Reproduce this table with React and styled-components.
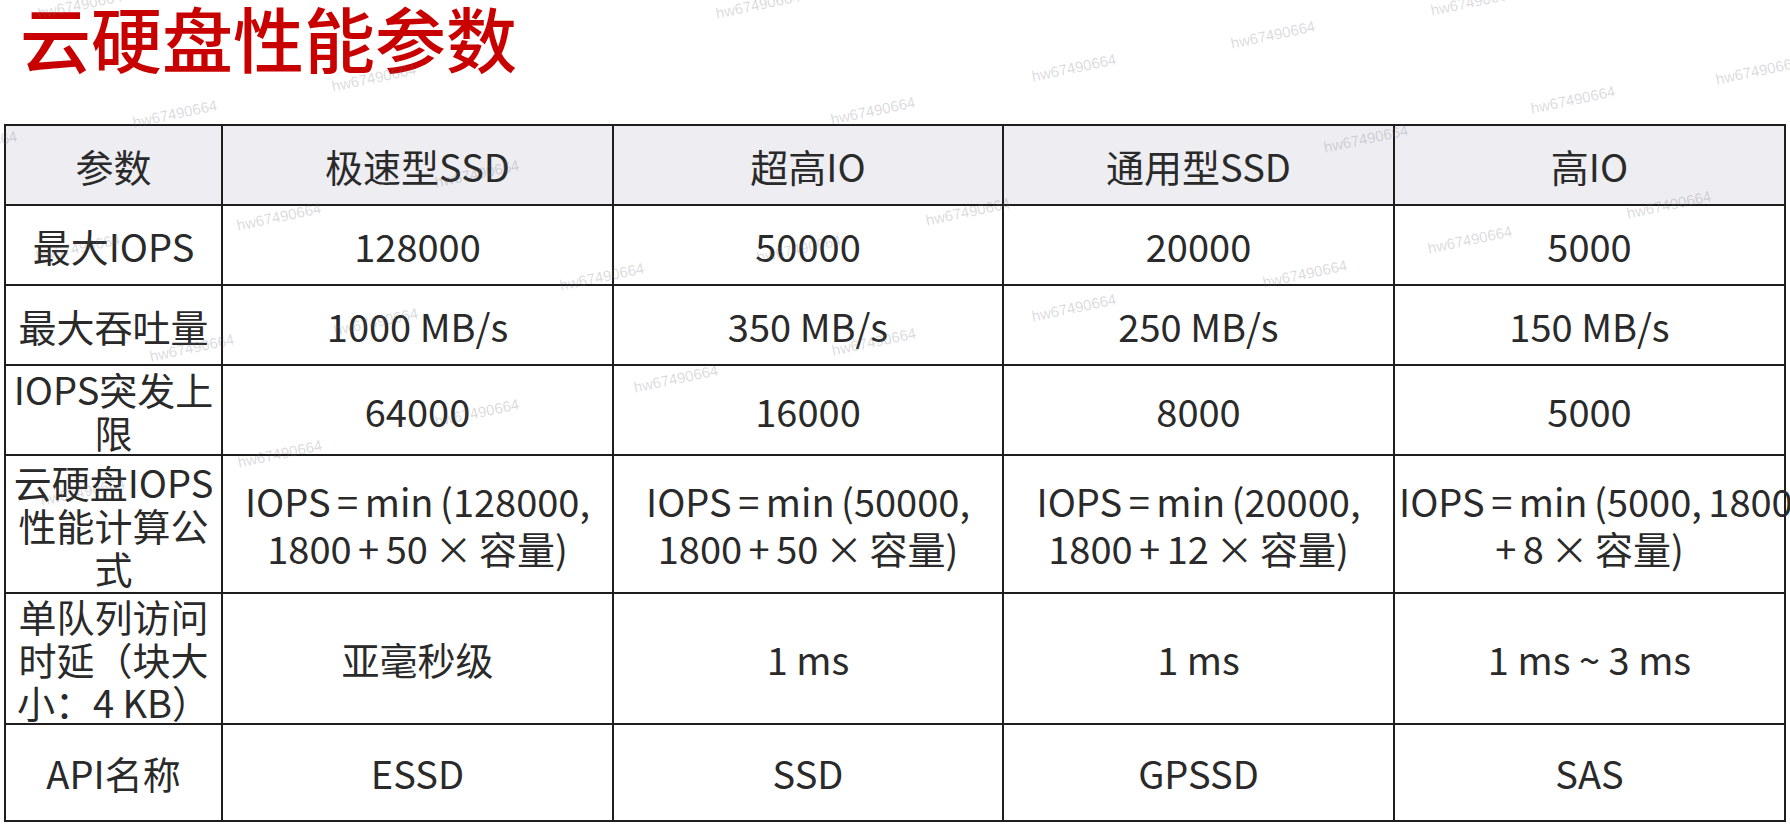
import React from "react";
import styled, { createGlobalStyle } from "styled-components";

const GlobalStyle = createGlobalStyle`
  html, body {
    margin: 0;
    padding: 0;
    background: #ffffff;
  }
  body {
    width: 1790px;
    height: 826px;
    overflow: hidden;
    font-family: "Noto Sans CJK SC", "Noto Sans", sans-serif;
  }
`;

const Page = styled.div`
  position: relative;
  width: 1790px;
  height: 826px;
  display: flex;
  flex-direction: column;
`;

const Header = styled.header`
  height: 124px;
  padding-left: 20px;
  display: flex;
  align-items: flex-start;
`;

const Title = styled.h1`
  margin: 0;
  font-family: "Noto Sans CJK SC", sans-serif;
  font-size: 71px;
  line-height: 72px;
  font-weight: 500;
  color: #c80000;
`;

const Table = styled.table`
  margin-left: 4px;
  width: 1780px;
  border-collapse: collapse;
  table-layout: fixed;
  color: #2a2a2a;
  font-size: 38px;
  line-height: 43px;
  font-weight: 400;
`;

const Row = styled.tr`
  height: ${(p) => p.$h}px;
  background: ${(p) => (p.$head ? "#ededf2" : "#ffffff")};
`;

const Cell = styled.td`
  border: 2px solid #1e1e1e;
  padding: 0 4px;
  text-align: center;
  vertical-align: middle;
  white-space: ${(p) => (p.$formula ? "nowrap" : "normal")};
  line-height: ${(p) => (p.$formula ? "47px" : "43px")};
  word-spacing: ${(p) => (p.$formula ? "-2px" : "0")};
`;

const Marks = styled.div`
  position: absolute;
  inset: 0;
  pointer-events: none;
  overflow: hidden;
`;

const Mark = styled.span`
  position: absolute;
  left: ${(p) => p.$x - 43}px;
  top: ${(p) => p.$y - 9}px;
  font-family: "Liberation Sans", Arial, sans-serif;
  font-size: 15px;
  line-height: 18px;
  color: rgba(110, 110, 120, 0.26);
  transform: rotate(-12deg);
  white-space: nowrap;
`;

const columns = ["参数", "极速型SSD", "超高IO", "通用型SSD", "高IO"];

const rows = [
  { label: "最大IOPS", h: 80, cells: ["128000", "50000", "20000", "5000"] },
  { label: "最大吞吐量", h: 80, cells: ["1000 MB/s", "350 MB/s", "250 MB/s", "150 MB/s"] },
  { label: "IOPS突发上限", h: 90, cells: ["64000", "16000", "8000", "5000"] },
  {
    label: "云硬盘IOPS性能计算公式",
    h: 138,
    formula: true,
    cells: [
      ["IOPS = min (128000,", "1800 + 50 × 容量)"],
      ["IOPS = min (50000,", "1800 + 50 × 容量)"],
      ["IOPS = min (20000,", "1800 + 12 × 容量)"],
      ["IOPS = min (5000, 1800", "+ 8 × 容量)"],
    ],
  },
  { label: "单队列访问时延（块大小：4 KB）", h: 130, cells: ["亚毫秒级", "1 ms", "1 ms", "1 ms ~ 3 ms"] },
  { label: "API名称", h: 97, cells: ["ESSD", "SSD", "GPSSD", "SAS"] },
];

// faint watermark stamps from the source slide
const marks = [
  [758, 5], [1473, 2], [80, 5], [374, 78], [1273, 35], [175, 114], [873, 111],
  [1074, 68], [1573, 100], [1758, 71], [-25, 145], [1366, 139], [477, 174],
  [279, 217], [968, 212], [1669, 205], [799, 249], [1470, 240], [602, 277],
  [1305, 274], [78, 248], [376, 322], [1074, 308], [874, 342], [192, 348],
  [676, 379], [477, 413], [280, 454], [83, 492],
];

function FormulaText({ lines }) {
  return lines.map((line, i) => (
    <React.Fragment key={i}>
      {i > 0 && <br />}
      {line}
    </React.Fragment>
  ));
}

export default function App() {
  return (
    <Page>
      <GlobalStyle />
      <Header>
        <Title>云硬盘性能参数</Title>
      </Header>
      <Table>
        <colgroup>
          <col style={{ width: "217px" }} />
          <col style={{ width: "391px" }} />
          <col style={{ width: "390px" }} />
          <col style={{ width: "391px" }} />
          <col style={{ width: "391px" }} />
        </colgroup>
        <tbody>
          <Row $head $h={80}>
            {columns.map((c) => (
              <Cell key={c}>{c}</Cell>
            ))}
          </Row>
          {rows.map((r) => (
            <Row key={r.label} $h={r.h}>
              <Cell>{r.label}</Cell>
              {r.cells.map((c, i) => (
                <Cell key={i} $formula={r.formula}>
                  {r.formula ? <FormulaText lines={c} /> : c}
                </Cell>
              ))}
            </Row>
          ))}
        </tbody>
      </Table>
      <Marks>
        {marks.map(([x, y], i) => (
          <Mark key={i} $x={x} $y={y}>
            hw67490664
          </Mark>
        ))}
      </Marks>
    </Page>
  );
}
